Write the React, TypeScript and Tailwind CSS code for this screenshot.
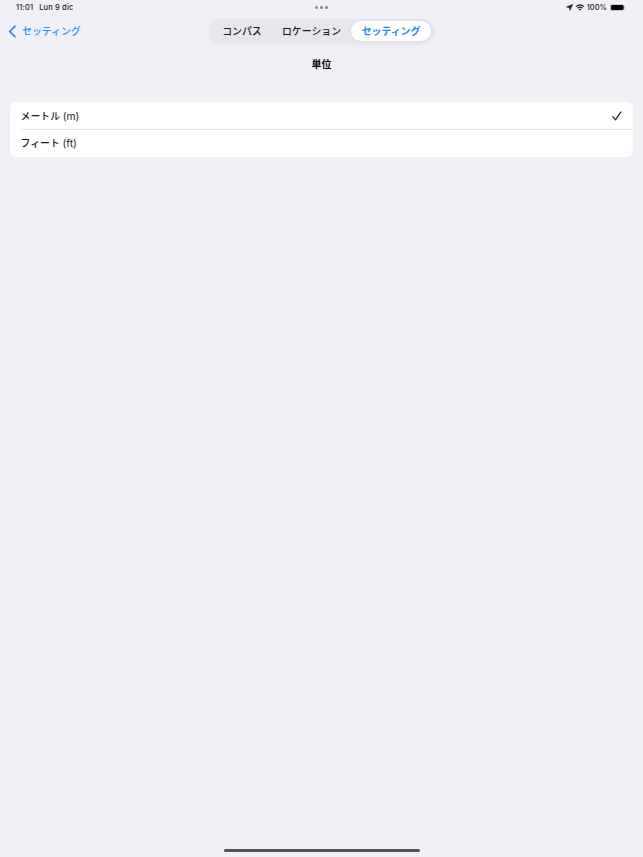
const tabs = ['コンパス', 'ロケーション', 'セッティング'];

const units = [
  { label: 'メートル', symbol: '(m)', selected: true },
  { label: 'フィート', symbol: '(ft)', selected: false },
];

const StatusBar = () => (
  <div className="flex h-[15px] items-center justify-between pl-4 pr-[17px] text-[7.5px] font-medium leading-[15px] text-[#1c1c1e]">
    <div className="flex w-[120px] gap-[6px] whitespace-nowrap tracking-[0.15px]">
      <span>11:01</span>
      <span>Lun 9 dic</span>
    </div>
    <div className="flex gap-[2px]">
      <span className="size-[3px] rounded-full bg-[#858589]" />
      <span className="size-[3px] rounded-full bg-[#858589]" />
      <span className="size-[3px] rounded-full bg-[#858589]" />
    </div>
    <div className="flex w-[120px] items-center justify-end">
      <svg className="mr-[2px] h-[7px] w-[7px]" viewBox="0 0 6 6" fill="currentColor">
        <path
          d="M5.6.4 3.4 5.4 3 3 .6 2.6Z"
          stroke="currentColor"
          strokeWidth={0.6}
          strokeLinejoin="round"
        />
      </svg>
      <svg
        className="mr-[2px] h-[7px] w-[10px]"
        viewBox="0 0 9 7"
        fill="none"
        stroke="currentColor"
        strokeWidth={1.2}
      >
        <path d="M.5 2.6Q4.5-1 8.5 2.6M2 4.2Q4.5 2 7 4.2" />
        <path d="M4.5 6.8 3.1 5.3Q4.5 4.2 5.9 5.3Z" fill="currentColor" stroke="none" />
      </svg>
      <span className="mr-[3px]">100%</span>
      <svg className="h-[7px] w-[16px]" viewBox="0 0 16 7">
        <rect x="0.3" y="0.3" width="13.9" height="6.4" rx="2" fill="none" stroke="#a5a5a9" strokeWidth={0.6} />
        <rect x="0.9" y="0.9" width="12.7" height="5.2" rx="1.5" fill="#000" />
        <path d="M14.9 2.5Q16 3.5 14.9 4.5Z" fill="#a5a5a9" />
      </svg>
    </div>
  </div>
);

const NavigationBar = () => (
  <div className="mt-1 grid grid-cols-[200px_1fr_200px] items-center">
    <button className="ml-2 flex items-center gap-[5px] text-[9.9px] font-medium leading-none text-[#2b91f3]">
      <svg
        className="h-[13px] w-[9px]"
        viewBox="0 0 9 13"
        fill="none"
        stroke="#1588f5"
        strokeWidth={1.7}
        strokeLinecap="round"
        strokeLinejoin="round"
      >
        <path d="M6.9 1.4 1.6 6.5 6.9 11.6" />
      </svg>
      セッティング
    </button>
    <div className="mx-auto flex h-[25px] w-[225px] items-center rounded-full bg-[#e7e7eb] pb-px pl-[3px] text-[9.9px] font-medium leading-none text-[#1c1c1e] shadow-[0_1px_5px_rgba(0,0,0,0.04)]">
      {tabs.map((tab) => (
        <button
          key={tab}
          className={
            tab === 'セッティング'
              ? 'h-[20px] w-[80px] rounded-full bg-white pt-px font-bold text-[#158af2] shadow-[0_0_4px_rgba(0,0,0,0.07)]'
              : tab === 'コンパス'
                ? 'h-[20px] w-[60px] pt-px'
                : 'h-[20px] w-[79px] pt-px'
          }
        >
          {tab}
        </button>
      ))}
    </div>
  </div>
);

const App = () => {
  return (
    <div
      lang="ja"
      className="flex h-screen flex-col bg-[#f1f0f6] font-[Inter,'Noto_Sans_CJK_JP',sans-serif]"
    >
      <StatusBar />
      <NavigationBar />
      <h1 className="mt-3 text-center text-[9.9px] font-bold leading-4 text-black">単位</h1>

      <ul className="mx-[10px] mt-[30px] rounded-[6px] bg-white pl-[10.5px] text-[9.9px] text-[#1c1c1e]">
        {units.map((unit) => (
          <li
            key={unit.label}
            className="flex h-[27.5px] items-center justify-between border-[#e4e4e7] pr-[11px] not-last:border-b"
          >
            <span className={unit.selected ? 'pt-0.5 font-medium' : 'font-medium'}>
              {unit.label} <span className="text-[10.3px] font-normal">{unit.symbol}</span>
            </span>
            {unit.selected && (
              <svg
                className="mt-px h-[10px] w-[10px]"
                viewBox="0 0 10 10"
                fill="none"
                stroke="currentColor"
                strokeWidth={1.2}
                strokeLinecap="round"
                strokeLinejoin="round"
              >
                <path d="M.9 5.6 3.5 8.8 9 .9" />
              </svg>
            )}
          </li>
        ))}
      </ul>

      <div className="mx-auto mb-[5px] mt-auto h-[3px] w-[196px] rounded-full bg-[#55555a]" />
    </div>
  );
};

export default App;
